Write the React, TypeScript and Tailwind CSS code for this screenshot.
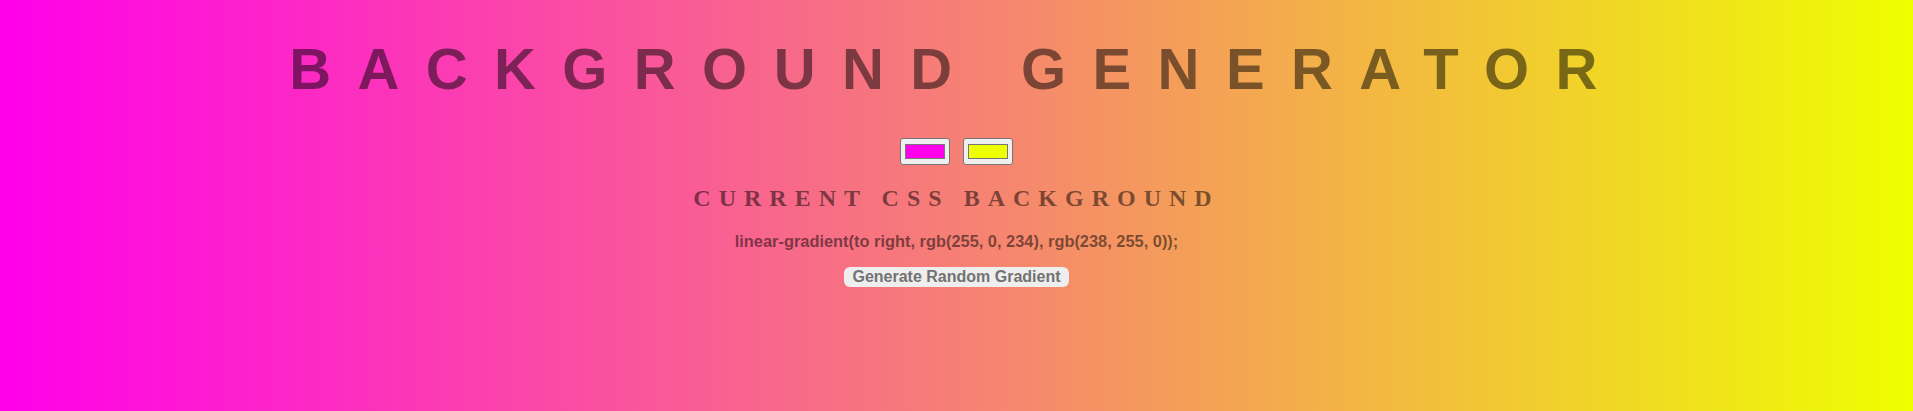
import React, { useState } from 'react';

const toHex = (n: number) => n.toString(16).padStart(2, '0');

const hexToRgb = (hex: string) => {
    const v = hex.replace('#', '');
    const r = parseInt(v.slice(0, 2), 16);
    const g = parseInt(v.slice(2, 4), 16);
    const b = parseInt(v.slice(4, 6), 16);
    return `rgb(${r}, ${g}, ${b})`;
};

const randomHex = () =>
    '#' + toHex(Math.floor(Math.random() * 256)) + toHex(Math.floor(Math.random() * 256)) + toHex(Math.floor(Math.random() * 256));

const App: React.FC = () => {
    const [color1, setColor1] = useState('#ff00ea');
    const [color2, setColor2] = useState('#eeff00');

    const gradient = `linear-gradient(to right, ${hexToRgb(color1)}, ${hexToRgb(color2)})`;

    const handleRandom = () => {
        setColor1(randomHex());
        setColor2(randomHex());
    };

    return (
        // background is computed from the picked colours, so it stays inline
        <div
            className="min-h-screen h-[411px] w-full flex flex-col items-center text-center font-['Liberation_Sans',Arial,sans-serif] text-black/50"
            style={{ background: gradient }}
        >
            <h1 className="pt-[36px] text-[58px] leading-[66px] font-bold uppercase tracking-[26.4px]">
                Background Generator
            </h1>

            <div className="mt-[36px] flex items-center justify-center gap-[13px]">
                <input
                    type="color"
                    value={color1}
                    onChange={e => setColor1(e.target.value)}
                    className="w-[50px] h-[27px] px-[2px] py-[1px] border border-[#767676] rounded-[3px] bg-[#efefef] cursor-pointer"
                />
                <input
                    type="color"
                    value={color2}
                    onChange={e => setColor2(e.target.value)}
                    className="w-[50px] h-[27px] px-[2px] py-[1px] border border-[#767676] rounded-[3px] bg-[#efefef] cursor-pointer"
                />
            </div>

            <h3 className="mt-[19px] font-['Liberation_Serif','Times_New_Roman',serif] text-[24px] leading-[28px] font-bold uppercase tracking-[8px]">
                Current CSS Background
            </h3>

            <p className="mt-[19px] text-[16.4px] leading-[20px] font-bold">{gradient};</p>

            <button
                onClick={handleRandom}
                className="mt-[16px] h-[20px] px-[8px] rounded-[6px] bg-[#eeeeee] text-[16px] leading-[20px] font-bold text-[#727272] cursor-pointer"
            >
                Generate Random Gradient
            </button>
        </div>
    );
};

export default App;
